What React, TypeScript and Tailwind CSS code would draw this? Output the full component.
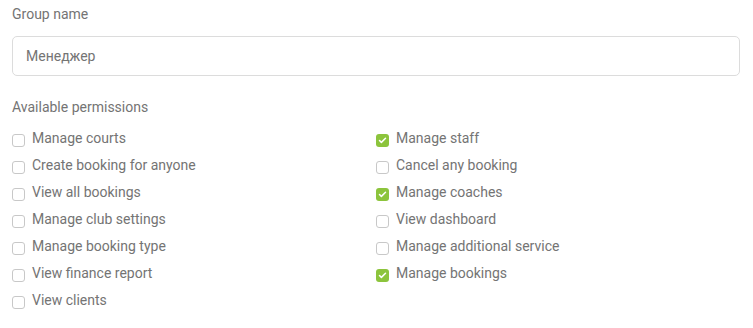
import { Check } from 'lucide-react';

const left = [
  { label: 'Manage courts', checked: false },
  { label: 'Create booking for anyone', checked: false },
  { label: 'View all bookings', checked: false },
  { label: 'Manage club settings', checked: false },
  { label: 'Manage booking type', checked: false },
  { label: 'View finance report', checked: false },
  { label: 'View clients', checked: false },
];

const right = [
  { label: 'Manage staff', checked: true },
  { label: 'Cancel any booking', checked: false },
  { label: 'Manage coaches', checked: true },
  { label: 'View dashboard', checked: false },
  { label: 'Manage additional service', checked: false },
  { label: 'Manage bookings', checked: true },
];

const Perm = ({ label, checked }: { label: string; checked: boolean }) => (
  <label className="flex items-center h-[27px] gap-[7px] cursor-pointer">
    {checked ? (
      <span className="w-[13px] h-[13px] rounded-[3px] bg-[#8cc43c] flex items-center justify-center mt-[3px]">
        <Check className="w-[9px] h-[9px] text-white" strokeWidth={4} />
      </span>
    ) : (
      <span className="w-[13px] h-[13px] rounded-[3px] border border-[#c8c8c8] bg-white mt-[3px]"></span>
    )}
    <span className="text-[14px] text-[#747474]">{label}</span>
  </label>
);

const App = () => {
  return (
    <div className="w-[753px] h-[328px] bg-white px-[12px] pt-[5px] font-['Roboto',sans-serif]">
      <div className="text-[14px] text-[#747474] leading-[18px]">Group name</div>
      <div className="mt-[13px] w-[728px] h-[40px] border border-[#dcdcdc] rounded-[5px] flex items-center px-[13px] text-[14px] text-[#747474]">
        Менеджер
      </div>
      <div className="mt-[22px] text-[14px] text-[#747474] leading-[18px]">Available permissions</div>
      <div className="mt-[9px] grid grid-cols-2 w-[728px]">
        <div className="flex flex-col">
          {left.map((p) => (
            <Perm key={p.label} {...p} />
          ))}
        </div>
        <div className="flex flex-col">
          {right.map((p) => (
            <Perm key={p.label} {...p} />
          ))}
        </div>
      </div>
    </div>
  );
};

export default App;
